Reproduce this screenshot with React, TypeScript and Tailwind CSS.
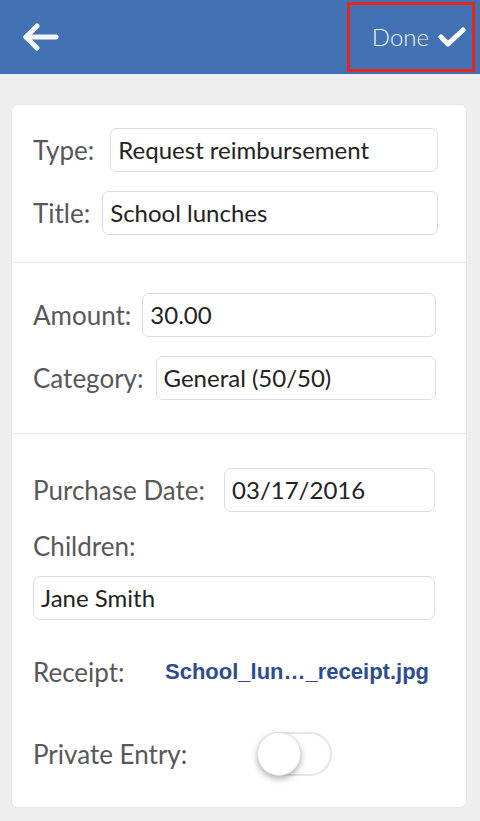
import React from "react";

function Field({ label, value, gap = "gap-[12px]" }: { label: string; value: string; gap?: string }) {
  return (
    <div className={`flex items-center ${gap}`}>
      <span className="text-[26px] text-[#585858] whitespace-nowrap leading-none">{label}</span>
      <div className="flex-1 h-[44px] rounded-[7px] border border-[#dcdcdc] bg-white flex items-center px-[7px] text-[24px] text-[#222] leading-none whitespace-nowrap overflow-hidden">
        {value}
      </div>
    </div>
  );
}

export default function App() {
  return (
    <div className="w-[480px] h-[821px] bg-[#eeeeee] overflow-hidden font-['Lato',sans-serif]">
      <header className="h-[74px] bg-[#4272b4] flex items-center">
        <div className="pl-[22px] flex items-center">
          <svg width="38" height="28" viewBox="0 0 38 28" fill="none">
            <path d="M4 14 H34" stroke="#f4f6fa" strokeWidth="5" strokeLinecap="round" />
            <path d="M15 3 L4 14 L15 25" stroke="#f4f6fa" strokeWidth="5" strokeLinecap="round" strokeLinejoin="round" />
          </svg>
        </div>
        <div className="ml-auto mr-[5px] h-[70px] w-[128px] border-[3px] border-[#e5261b] flex items-center justify-end pr-[6px] gap-[9px]">
          <span className="text-[24px] font-light text-[#eef2f9] leading-none">Done</span>
          <svg width="28" height="20" viewBox="0 0 28 20" fill="none">
            <path d="M3 10 L10 17 L25 3" stroke="#ffffff" strokeWidth="5" strokeLinecap="round" strokeLinejoin="round" />
          </svg>
        </div>
      </header>

      <main className="pt-[31px] pl-[12px]">
        <div className="w-[454px] bg-white rounded-[6px] shadow-[0_0_0_1px_#e6e6e6]">
          <section className="pt-[23px] pb-[27px] pl-[21px] pr-[28px] flex flex-col gap-[19px] border-b border-[#e6e6e6]">
            <Field label="Type:" value="Request reimbursement" gap="gap-[16px]" />
            <Field label="Title:" value="School lunches" gap="gap-[12px]" />
          </section>
          <section className="pt-[30px] pb-[33px] pl-[21px] pr-[30px] flex flex-col gap-[19px] border-b border-[#e6e6e6]">
            <Field label="Amount:" value="30.00" gap="gap-[11px]" />
            <Field label="Category:" value="General (50/50)" gap="gap-[12px]" />
          </section>
          <section className="pt-[34px] pb-[31px] pl-[21px] pr-[31px] flex flex-col">
            <Field label="Purchase Date:" value="03/17/2016" gap="gap-[19px]" />
            <div className="mt-[18px] h-[32px] flex items-center text-[26px] text-[#585858] leading-none">Children:</div>
            <div className="mt-[14px] h-[44px] rounded-[7px] border border-[#dcdcdc] flex items-center px-[7px] text-[24px] text-[#222] leading-none">
              Jane Smith
            </div>
            <div className="mt-[30px] h-[44px] flex items-center">
              <span className="text-[26px] text-[#585858] leading-none w-[132px]">Receipt:</span>
              <span className="font-['Liberation_Sans',sans-serif] font-bold text-[22px] text-[#2f4d8c] leading-none whitespace-nowrap">
                School_lun…_receipt.jpg
              </span>
            </div>
            <div className="mt-[38px] h-[44px] flex items-center">
              <span className="text-[26px] text-[#585858] leading-none w-[224px]">Private Entry:</span>
              <div className="relative w-[75px] h-[44px] rounded-full border-2 border-[#e6e6e6] bg-white">
                <div className="absolute left-[-2px] top-[-2px] w-[44px] h-[44px] rounded-full bg-white shadow-[0_3px_6px_rgba(0,0,0,0.3)] border border-[#e0e0e0]" />
              </div>
            </div>
          </section>
        </div>
      </main>
    </div>
  );
}
